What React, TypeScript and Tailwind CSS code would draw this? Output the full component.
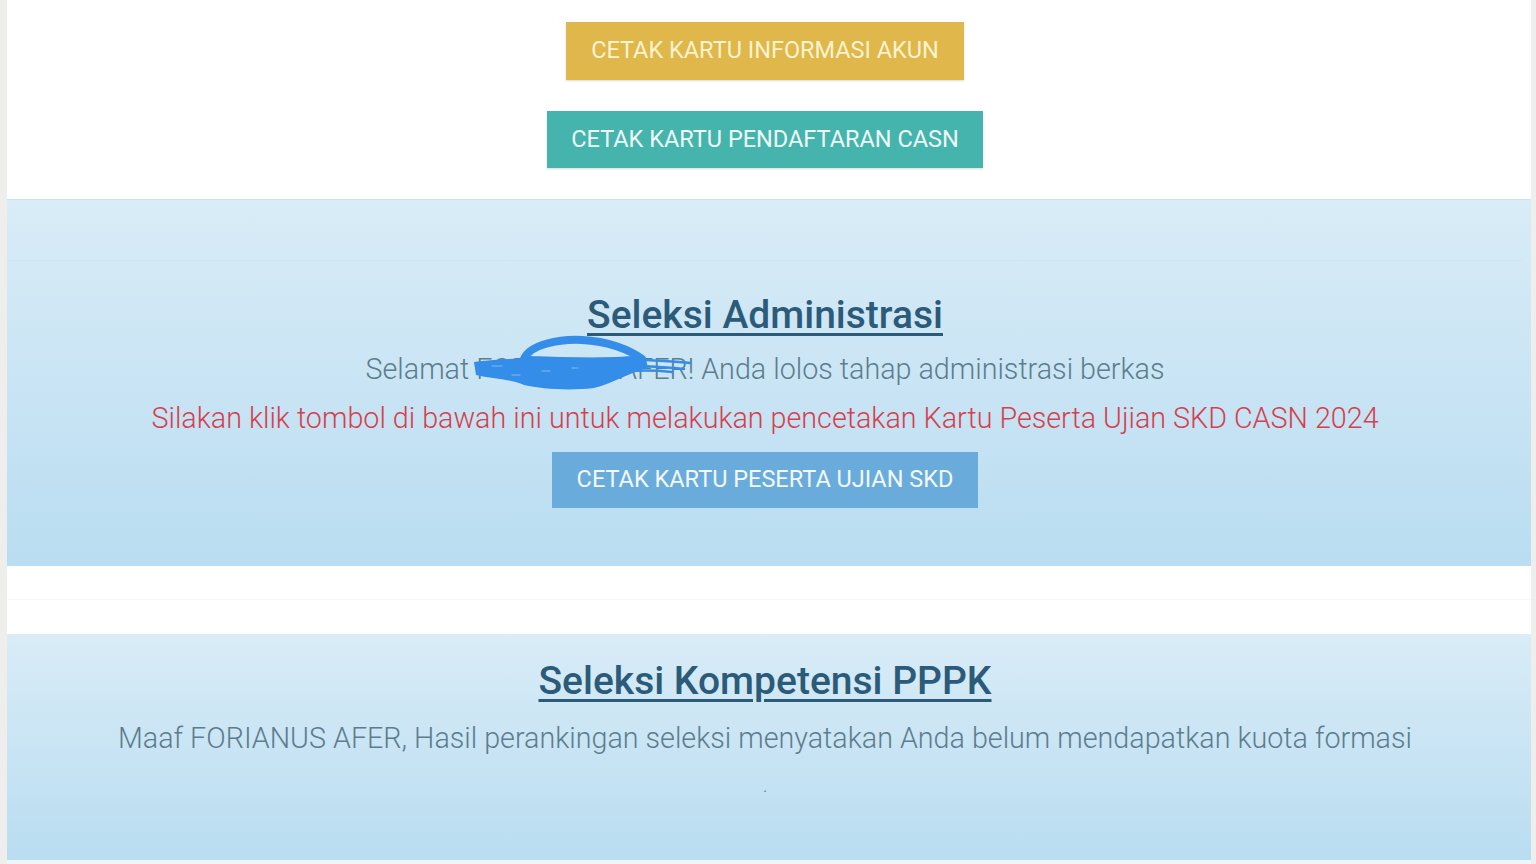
import React from 'react';

function Scribble() {
  return (
    <svg
      className="absolute left-[-4px] top-[-16px] w-[232px] h-[58px] pointer-events-none"
      viewBox="0 0 232 58"
      fill="none"
    >
      {/* loop on top */}
      <path
        d="M52 24 C58 9 88 4 110 5 C136 6 158 15 170 24 C148 27 100 27 60 25 Z"
        stroke="#348de8"
        strokeWidth="8"
        strokeLinejoin="round"
      />
      {/* dense band over the name */}
      <path
        d="M2 27 C40 22 100 22 174 24 L176 33 C156 38 142 48 122 53 C96 56 70 54 52 50 C40 44 20 44 4 40 Z"
        fill="#348de8"
      />
      <path
        d="M20 31 L30 31 M70 36 L78 36 M100 33 L106 33 M40 40 L48 40"
        stroke="#7fb8ef"
        strokeWidth="1.5"
        strokeLinecap="round"
        opacity="0.7"
      />
      {/* thin strokes through the tail */}
      <path
        d="M150 24 C175 25 200 26 218 28 M148 30 C172 31 195 32 212 34 M160 36 C175 35 190 36 200 37"
        stroke="#348de8"
        strokeWidth="2.5"
        strokeLinecap="round"
      />
    </svg>
  );
}

export default function App() {
  return (
    <div
      className="w-[1536px] h-[864px] overflow-hidden bg-[#eeeeec] pl-[7px] pr-[5px] flex flex-col"
      style={{ fontFamily: 'Roboto, "Noto Sans", sans-serif' }}
    >
      {/* Top card buttons */}
      <div className="bg-white h-[199px] flex flex-col items-center pt-[22px] gap-[31px] pr-[8px]">
        <button className="w-[398px] h-[58px] bg-[#dfb74b] text-[#fcf3cf] text-[23.5px] uppercase shadow-[0_1px_2px_rgba(0,0,0,0.15)]">
          Cetak Kartu Informasi Akun
        </button>
        <button className="w-[436px] h-[57px] bg-[#45b4ad] text-[#eefaf8] text-[23.5px] uppercase shadow-[0_1px_2px_rgba(0,0,0,0.15)]">
          Cetak Kartu Pendaftaran CASN
        </button>
      </div>

      {/* Seleksi Administrasi */}
      <div className="h-[367px] bg-gradient-to-b from-[#d9ecf7] to-[#b9ddf1] border-t border-[#c9e4ef] flex flex-col items-center pr-[8px]">
        <div className="w-full h-[61px] border-b border-[#cde6f2]" />
        <h2 className="mt-[32px] text-[39px] leading-[44px] font-medium text-[#2c5b79] underline decoration-[3px] underline-offset-[5px]">
          Seleksi Administrasi
        </h2>
        <p className="mt-[14px] text-[28.7px] leading-[36px] font-light text-[#5d7d8e]">
          Selamat{' '}
          <span className="relative inline-block">
            FORIANUS AFER!
            <Scribble />
          </span>{' '}
          Anda lolos tahap administrasi berkas
        </p>
        <p className="mt-[13px] text-[28.7px] leading-[36px] font-light text-[#d63f4e]">
          Silakan klik tombol di bawah ini untuk melakukan pencetakan Kartu Peserta Ujian SKD CASN 2024
        </p>
        <button className="mt-[16px] w-[426px] h-[56px] bg-[#69acdb] text-[#f2f8fc] text-[23.5px] uppercase">
          Cetak Kartu Peserta Ujian SKD
        </button>
      </div>

      {/* gap */}
      <div className="h-[68px] bg-white flex flex-col">
        <div className="h-[34px] border-b border-[#f4f8fa]" />
      </div>

      {/* Seleksi Kompetensi PPPK */}
      <div className="flex-1 bg-gradient-to-b from-[#d9ecf7] to-[#b9ddf1] flex flex-col items-center border-b-[4px] border-[#eef6fa] pr-[8px]">
        <h2 className="mt-[25px] text-[39px] leading-[44px] font-medium text-[#2c5b79] underline decoration-[3px] underline-offset-[5px]">
          Seleksi Kompetensi PPPK
        </h2>
        <p className="mt-[17px] text-[28.7px] leading-[36px] font-light text-[#5d7d8e]">
          Maaf FORIANUS AFER, Hasil perankingan seleksi menyatakan Anda belum mendapatkan kuota formasi
        </p>
        <p className="mt-[21px] text-[14px] leading-[20px] text-[#5d7d8e]">.</p>
      </div>
    </div>
  );
}
